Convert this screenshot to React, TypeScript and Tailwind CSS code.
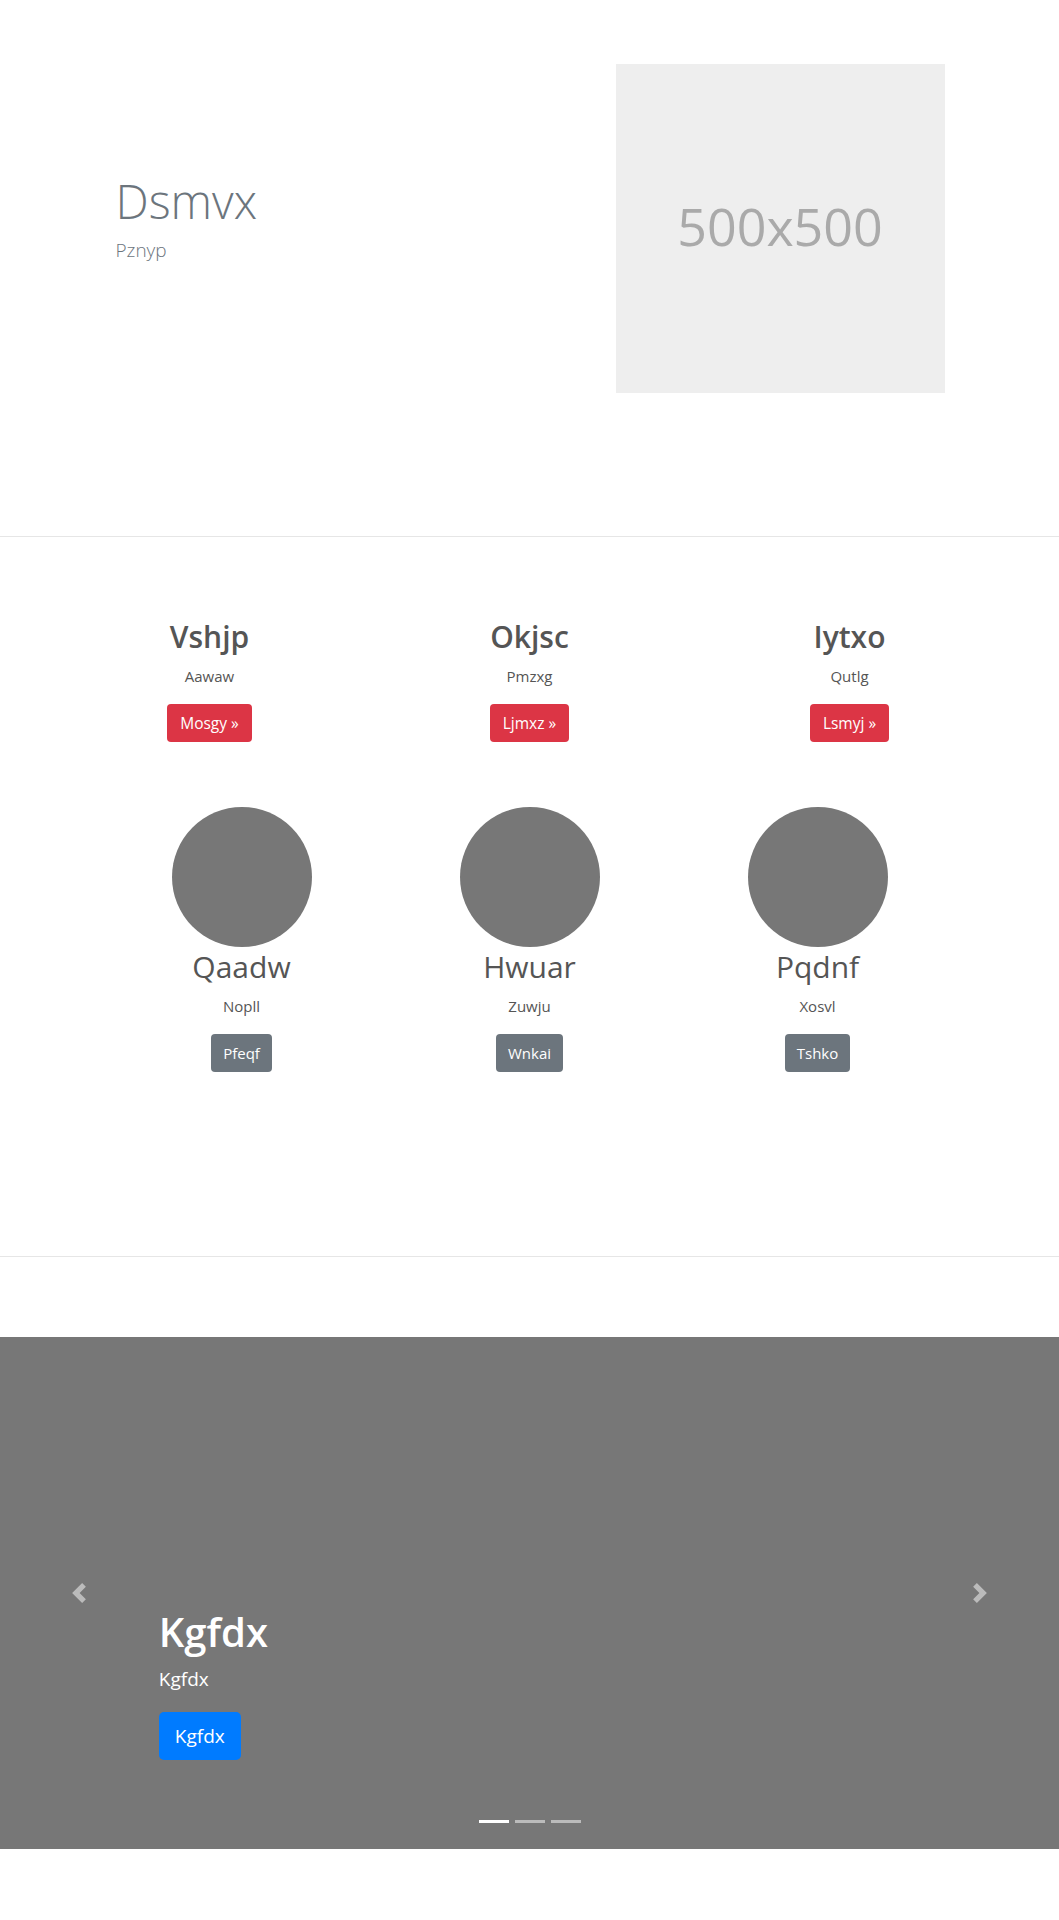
import React from "react";

const font = { fontFamily: '"Segoe UI", "Open Sans", "Noto Sans", sans-serif' };

function Feature({ title, sub, btn }: { title: string; sub: string; btn: string }) {
  return (
    <div className="w-[320px] flex flex-col items-center text-center">
      <h2 className="text-[30px] leading-[38px] font-semibold text-[#555] mb-2">{title}</h2>
      <p className="text-[15px] leading-[24px] text-[#555] mb-4">{sub}</p>
      <a className="inline-block bg-[#dc3545] text-white text-[15.5px] leading-[24px] px-[13px] py-[7px] rounded-[4px]">
        {btn} »
      </a>
    </div>
  );
}

function Person({ name, sub, btn }: { name: string; sub: string; btn: string }) {
  return (
    <div className="w-[288px] flex flex-col items-center text-center">
      <div className="w-[140px] h-[140px] rounded-full bg-[#777]" />
      <h2 className="text-[30px] leading-[38px] font-normal text-[#555] mt-[1px] mb-2">{name}</h2>
      <p className="text-[15px] leading-[24px] text-[#555] mb-4">{sub}</p>
      <a className="inline-block bg-[#6c757d] text-white text-[15px] leading-[24px] px-3 py-[7px] rounded-[4px]">
        {btn}
      </a>
    </div>
  );
}

export default function App() {
  return (
    <div className="w-full bg-white" style={font}>
      {/* Hero */}
      <section className="border-b border-[#e6e6e6] pt-[64px] pb-[143px]">
        <div className="w-[960px] mx-auto flex items-center">
          <div className="w-[566px] pl-[66px] pb-[23px]">
            <h1 className="text-[47px] leading-[60px] font-light text-[#6c757d] mb-[5px]">Dsmvx</h1>
            <p className="text-[19px] leading-[28px] font-light text-[#6c757d]">Pznyp</p>
          </div>
          <div className="w-[329px] h-[329px] bg-[#eeeeee] flex items-center justify-center">
            <span className="text-[52px] text-[#aaaaaa] -mt-[6px]">500x500</span>
          </div>
        </div>
      </section>

      {/* Features */}
      <section className="border-b border-[#e6e6e6] pt-[81px] pb-[184px]">
        <div className="w-[960px] mx-auto flex">
          <Feature title="Vshjp" sub="Aawaw" btn="Mosgy" />
          <Feature title="Okjsc" sub="Pmzxg" btn="Ljmxz" />
          <Feature title="Iytxo" sub="Qutlg" btn="Lsmyj" />
        </div>
        <div className="flex justify-center mt-[65px]">
          <Person name="Qaadw" sub="Nopll" btn="Pfeqf" />
          <Person name="Hwuar" sub="Zuwju" btn="Wnkai" />
          <Person name="Pqdnf" sub="Xosvl" btn="Tshko" />
        </div>
      </section>

      {/* Carousel */}
      <section className="mt-[80px] mb-[72px] relative h-[512px] bg-[#777]">
        <div className="absolute left-0 top-0 bottom-0 w-[15%] flex items-center justify-center">
          <svg width="20" height="20" viewBox="0 0 8 8" className="opacity-50">
            <path fill="#fff" d="M5.25 0l-4 4 4 4 1.5-1.5L4.25 4l2.5-2.5L5.25 0z" />
          </svg>
        </div>
        <div className="absolute right-0 top-0 bottom-0 w-[15%] flex items-center justify-center">
          <svg width="20" height="20" viewBox="0 0 8 8" className="opacity-50">
            <path fill="#fff" d="M2.75 0l-1.5 1.5L3.75 4l-2.5 2.5L2.75 8l4-4-4-4z" />
          </svg>
        </div>
        <div className="absolute left-[15%] right-[15%] bottom-[69px] pt-5 pb-5 text-white">
          <h1 className="text-[40px] leading-[48px] font-semibold mb-2">Kgfdx</h1>
          <p className="text-[19px] leading-[30px] font-medium mb-[18px]">Kgfdx</p>
          <a className="inline-flex items-center h-[48px] bg-[#007bff] text-white text-[19px] px-4 rounded-[5px] font-medium">
            Kgfdx
          </a>
        </div>
        <div className="absolute bottom-0 left-0 right-0 mb-4 flex justify-center">
          <span className="block w-[30px] h-[3px] my-[10px] mx-[3px] bg-white" />
          <span className="block w-[30px] h-[3px] my-[10px] mx-[3px] bg-white opacity-50" />
          <span className="block w-[30px] h-[3px] my-[10px] mx-[3px] bg-white opacity-50" />
        </div>
      </section>
    </div>
  );
}
